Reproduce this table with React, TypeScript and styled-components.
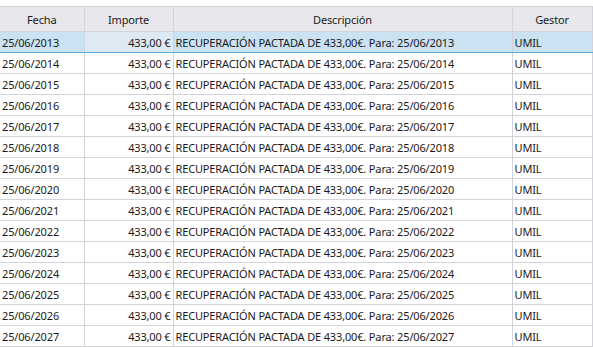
import React from "react";
import styled, { createGlobalStyle } from "styled-components";

const GlobalStyle = createGlobalStyle`
  html, body {
    margin: 0;
    padding: 0;
    background: #fff;
  }
  body {
    font-family: "Noto Sans", "Open Sans", sans-serif;
    font-size: 11px;
    letter-spacing: -0.15px;
    color: #1a1a1a;
  }
`;

const years = Array.from({ length: 15 }, (_, i) => 2013 + i);

const rows = years.map((y) => ({
  fecha: `25/06/${y}`,
  importe: "433,00 €",
  descripcion: `RECUPERACIÓN PACTADA DE 433,00€. Para: 25/06/${y}`,
  gestor: "UMIL",
}));

const App = () => {
  return (
    <Wrapper>
      <GlobalStyle />
      <Grid>
        <colgroup>
          <col style={{ width: 84 }} />
          <col style={{ width: 89 }} />
          <col style={{ width: 339 }} />
          <col style={{ width: 80 }} />
        </colgroup>
        <thead>
          <tr>
            <HeadCell>Fecha</HeadCell>
            <HeadCell>Importe</HeadCell>
            <HeadCell>Descripción</HeadCell>
            <HeadCell>Gestor</HeadCell>
          </tr>
        </thead>
        <tbody>
          {rows.map((r, i) => (
            <Row key={r.fecha} selected={i === 0}>
              <Cell>{r.fecha}</Cell>
              <Cell align="right" focused={i === 0}>
                {r.importe}
              </Cell>
              <Cell>{r.descripcion}</Cell>
              <Cell>{r.gestor}</Cell>
            </Row>
          ))}
        </tbody>
      </Grid>
    </Wrapper>
  );
};

const Wrapper = styled.div`
  padding-top: 6px;
  width: 593px;
`;

const Grid = styled.table`
  border-collapse: collapse;
  table-layout: fixed;
  width: 592px;
`;

const HeadCell = styled.th`
  height: 24px;
  padding: 0 4px;
  background: #e8e8ec;
  border: 1px solid #d3d3dc;
  border-left: none;
  font-weight: normal;
  text-align: center;
  color: #1a1a1a;
  white-space: nowrap;
`;

const Row = styled.tr<{ selected?: boolean }>`
  background: ${(p) => (p.selected ? "#cbe2f2" : "#fff")};
  td {
    border-bottom: 1px solid ${(p) => (p.selected ? "#56aae8" : "#d3d3dc")};
  }
`;

const Cell = styled.td<{ align?: string; focused?: boolean }>`
  height: 20px;
  padding: 0 2px;
  border-right: 1px solid #d3d3dc;
  text-align: ${(p) => p.align || "left"};
  white-space: nowrap;
  overflow: hidden;
  ${(p) => (p.focused ? "background: #dde9f3;" : "")}
`;

export default App;
